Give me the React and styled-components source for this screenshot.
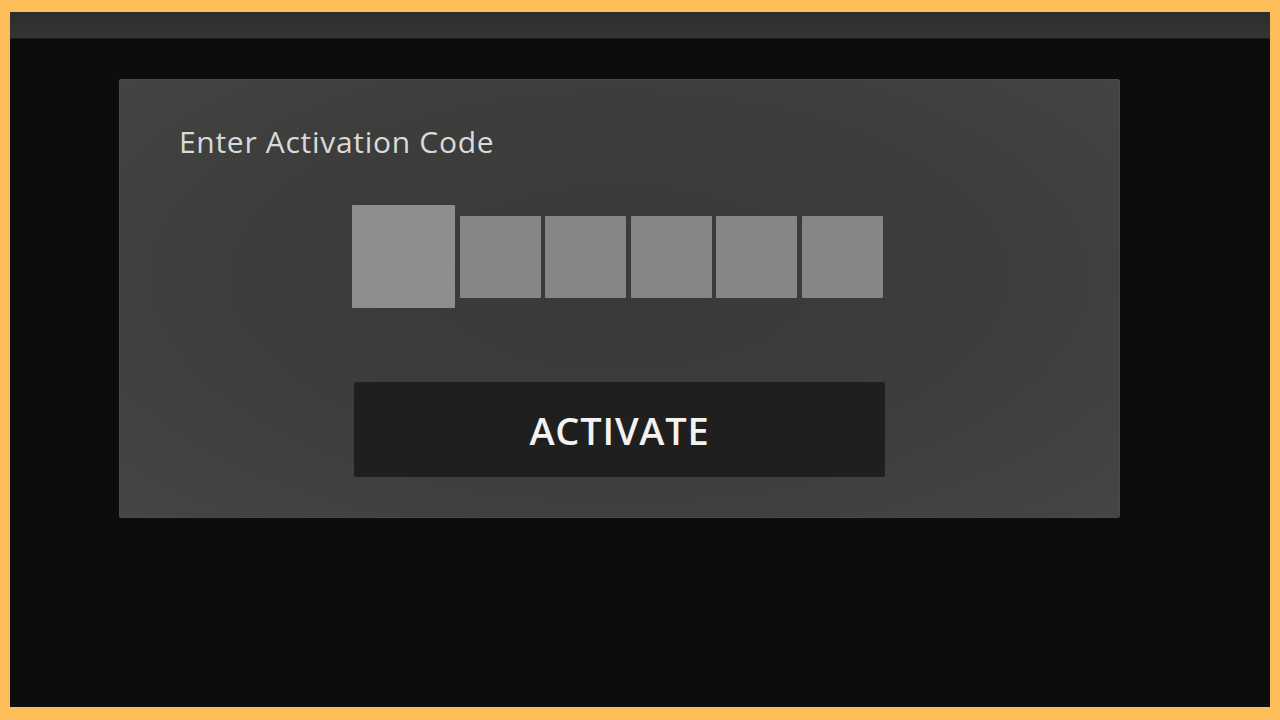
import React from "react";
import styled, { createGlobalStyle } from "styled-components";

const Global = createGlobalStyle`
  html, body { margin: 0; padding: 0; background: #ffbd59; }
  body { font-family: "Open Sans", "Liberation Sans", sans-serif; }
`;

const Frame = styled.div`
  width: 1280px;
  height: 720px;
  box-sizing: border-box;
  padding: 12px 10px 13px 10px;
  background: #ffbd59;
  display: flex;
`;

const Screen = styled.div`
  flex: 1;
  display: flex;
  flex-direction: column;
  background: #0d0d0d;
`;

const TopBar = styled.div`
  height: 26px;
  background: linear-gradient(180deg, #2c2e2c 0%, #333533 100%);
  border-bottom: 1px solid #1a1a1a;
`;

const Main = styled.div`
  flex: 1;
  padding: 40px 0 0 109px;
`;

const Panel = styled.div`
  width: 1001px;
  height: 439px;
  box-sizing: border-box;
  background: radial-gradient(ellipse at 50% 45%, #393a38 0%, #3d3e3c 55%, #444544 100%);
  border: 1px solid #4a4a4a;
  border-radius: 2px;
  display: flex;
  flex-direction: column;
  align-items: center;
  padding-top: 42px;
`;

const Title = styled.h1`
  align-self: flex-start;
  margin: 0 0 44px 59px;
  font-family: "Open Sans", "Liberation Sans", sans-serif;
  font-weight: 400;
  font-size: 30px;
  line-height: 39px;
  color: #dadada;
  letter-spacing: 0.7px;
`;

const CodeRow = styled.div`
  display: flex;
  align-items: center;
  gap: 4.5px;
  margin-bottom: 74px;
  margin-left: -4px;
`;

const CodeBox = styled.div`
  width: ${(p) => (p.$active ? 103 : 81)}px;
  height: ${(p) => (p.$active ? 103 : 82)}px;
  background: ${(p) => (p.$active ? "#8d8e8e" : "#858687")};
  border-radius: 1px;
`;

const ActivateButton = styled.button`
  width: 531px;
  height: 95px;
  border: none;
  border-radius: 2px;
  background: #1f1f1f;
  color: #f2f2f2;
  font-family: "Open Sans", "Liberation Sans", sans-serif;
  font-size: 38px;
  font-weight: 600;
  letter-spacing: 0.8px;
  cursor: pointer;
  padding: 0;
`;

export default function App() {
  const boxes = [true, false, false, false, false, false];
  return (
    <>
      <Global />
      <Frame>
        <Screen>
          <TopBar />
          <Main>
            <Panel>
              <Title>Enter Activation Code</Title>
              <CodeRow>
                {boxes.map((a, i) => (
                  <CodeBox key={i} $active={a} />
                ))}
              </CodeRow>
              <ActivateButton>ACTIVATE</ActivateButton>
            </Panel>
          </Main>
        </Screen>
      </Frame>
    </>
  );
}
